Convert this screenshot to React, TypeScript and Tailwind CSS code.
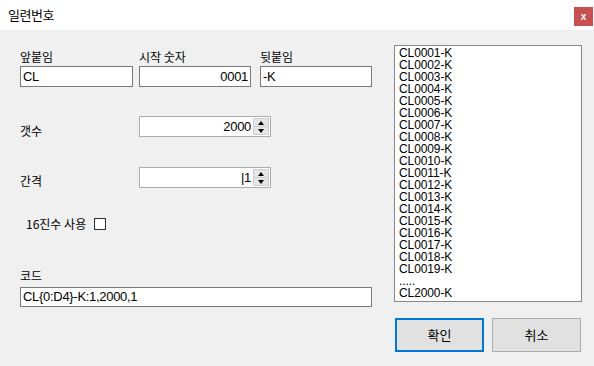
import React from "react";

const kr = { fontFamily: '"Noto Sans CJK KR", "Malgun Gothic", sans-serif' };
const latin = { fontFamily: '"Liberation Sans", Arial, sans-serif' };

const items = Array.from({ length: 19 }, (_, i) => `CL${String(i + 1).padStart(4, "0")}-K`);

function TextBox({ value, right, className }: { value: string; right?: boolean; className?: string }) {
  return (
    <div
      className={`h-[21px] bg-white border border-[#7a7a7a] flex items-center px-[2px] text-[13px] tracking-[-0.3px] text-black ${
        right ? "justify-end" : ""
      } ${className ?? ""}`}
      style={latin}
    >
      {value}
    </div>
  );
}

function SpinBox({ value }: { value: string }) {
  return (
    <div className="w-[132px] h-[21px] bg-white border border-[#adadad] flex items-stretch">
      <div
        className="flex-1 flex items-center justify-end pr-[2px] text-[13px] tracking-[-0.3px] text-black"
        style={latin}
      >
        {value}
      </div>
      <div className="w-[16px] flex flex-col my-[1px] mr-[1px] border border-[#cfcfcf] bg-[#e6e6e6]">
        <div className="flex-1 flex items-center justify-center border-b border-[#cfcfcf]">
          <div className="w-0 h-0 border-l-[3.5px] border-r-[3.5px] border-b-[4px] border-l-transparent border-r-transparent border-b-black" />
        </div>
        <div className="flex-1 flex items-center justify-center">
          <div className="w-0 h-0 border-l-[3.5px] border-r-[3.5px] border-t-[4px] border-l-transparent border-r-transparent border-t-black" />
        </div>
      </div>
    </div>
  );
}

export default function App() {
  return (
    <div className="w-[594px] h-[366px] bg-[#f0f0f0] flex flex-col overflow-hidden select-none">
      {/* title bar */}
      <div className="h-[30px] bg-white flex justify-between shrink-0">
        <div className="pl-[8px] pt-[5px] text-[13px] text-black tracking-[-0.5px]" style={kr}>
          일련번호
        </div>
        <div
          className="w-[19px] h-[19px] mt-[7px] mr-[1px] bg-[#c75050] flex items-center justify-center text-white text-[10px] font-bold leading-none"
          style={latin}
        >
          x
        </div>
      </div>

      <div className="flex pl-[20px]">
        {/* left side */}
        <div className="w-[352px] flex flex-col">
          <div className="mt-[18px] flex">
            <div className="w-[113px]">
              <div className="h-[18px] text-[12px] leading-[18px] text-black" style={kr}>앞붙임</div>
              <TextBox value="CL" />
            </div>
            <div className="w-[112px] ml-[6px]">
              <div className="h-[18px] text-[12px] leading-[18px] text-black" style={kr}>시작 숫자</div>
              <TextBox value="0001" right />
            </div>
            <div className="w-[112px] ml-[9px]">
              <div className="h-[18px] text-[12px] leading-[18px] text-black" style={kr}>뒷붙임</div>
              <TextBox value="-K" />
            </div>
          </div>

          <div className="mt-[29px] flex">
            <div className="w-[119px] pt-[6px] text-[12px] leading-[18px] text-black" style={kr}>갯수</div>
            <SpinBox value="2000" />
          </div>

          <div className="mt-[27px] flex">
            <div className="w-[119px] pt-[5px] text-[12px] leading-[18px] text-black" style={kr}>간격</div>
            <SpinBox value="|1" />
          </div>

          <div className="mt-[27px] flex items-center h-[14px] pl-[6px]">
            <div className="text-[12px] leading-[14px] text-black" style={kr}>16진수 사용</div>
            <div className="ml-[8px] w-[12px] h-[12px] border border-[#333333] bg-white" />
          </div>

          <div className="mt-[37px] h-[16px] text-[12px] leading-[16px] text-black" style={kr}>코드</div>
          <TextBox value="CL{0:D4}-K:1,2000,1" className="mt-[3px] !h-[20px]" />
        </div>

        {/* right side */}
        <div className="ml-[22px] mt-[15px] flex flex-col">
          <div
            className="w-[188px] h-[257px] bg-white border border-[#828790] pl-[4px] text-[12px] leading-[12px] tracking-[-0.1px] text-black overflow-hidden"
            style={latin}
          >
            {items.map((t) => (
              <div key={t} className="h-[12px] pt-[1px]">
                {t}
              </div>
            ))}
            <div className="h-[12px] pt-[1px]">.....</div>
            <div className="h-[12px] pt-[1px]">CL2000-K</div>
          </div>
          <div className="mt-[16px] flex gap-[8px] ml-[1px]">
            <div
              className="w-[89px] h-[34px] bg-[#e1e1e1] border-2 border-[#0078d7] flex items-center justify-center text-[13px] text-black"
              style={kr}
            >
              확인
            </div>
            <div
              className="w-[89px] h-[34px] bg-[#e1e1e1] border border-[#adadad] flex items-center justify-center text-[13px] text-black"
              style={kr}
            >
              취소
            </div>
          </div>
        </div>
      </div>
    </div>
  );
}
